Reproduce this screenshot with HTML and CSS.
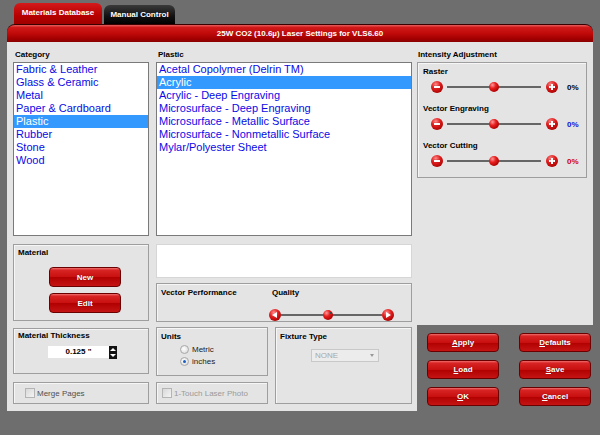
FILE: index.html
```html
<!DOCTYPE html>
<html lang="en">

<head>
    <meta charset="UTF-8">
    <meta name="viewport" content="width=device-width, initial-scale=1.0">
    <title>Laser Settings</title>
    <link rel="stylesheet" href="styles.css">
</head>

<body>
    <!-- Tabs -->
    <div class="tabs">
        <div class="tab active">Materials Database</div>
        <div class="tab">Manual Control</div>
    </div>

    <div class="window">
        <div class="titlebar">25W CO2 (10.6&micro;) Laser Settings for VLS6.60</div>

        <div class="panel">
            <!-- Left part of the panel -->
            <div class="left">
                <div class="col col-cat">
                    <div class="label">Category</div>
                    <ul class="listbox">
                        <li>Fabric &amp; Leather</li>
                        <li>Glass &amp; Ceramic</li>
                        <li>Metal</li>
                        <li>Paper &amp; Cardboard</li>
                        <li class="selected">Plastic</li>
                        <li>Rubber</li>
                        <li>Stone</li>
                        <li>Wood</li>
                    </ul>

                    <div class="group material">
                        <div class="label">Material</div>
                        <div class="btn-stack">
                            <button class="rbtn">New</button>
                            <button class="rbtn">Edit</button>
                        </div>
                    </div>

                    <div class="group thickness">
                        <div class="label">Material Thickness</div>
                        <div class="spin-row">
                            <div class="spin-input">0.125 "</div>
                            <div class="spinner">
                                <span class="up"></span>
                                <span class="down"></span>
                            </div>
                        </div>
                    </div>

                    <div class="group check-group">
                        <span class="checkbox"></span>
                        <span class="check-text">Merge Pages</span>
                    </div>
                </div>

                <div class="col col-plastic">
                    <div class="label">Plastic</div>
                    <ul class="listbox">
                        <li>Acetal Copolymer (Delrin TM)</li>
                        <li class="selected">Acrylic</li>
                        <li>Acrylic - Deep Engraving</li>
                        <li>Microsurface - Deep Engraving</li>
                        <li>Microsurface - Metallic Surface</li>
                        <li>Microsurface - Nonmetallic Surface</li>
                        <li>Mylar/Polyester Sheet</li>
                    </ul>

                    <div class="notes"></div>

                    <div class="group vector-perf">
                        <div class="label vp-label">Vector Performance</div>
                        <div class="quality">
                            <div class="label">Quality</div>
                            <div class="q-slider">
                                <span class="ball arrow-btn arrow-left"></span>
                                <div class="q-track">
                                    <span class="knob q-knob"></span>
                                    <span class="tick"></span>
                                </div>
                                <span class="ball arrow-btn arrow-right"></span>
                            </div>
                        </div>
                    </div>

                    <div class="bottom-row">
                        <div class="units-col">
                            <div class="group units">
                                <div class="label">Units</div>
                                <div class="radio-row"><span class="radio"></span>Metric</div>
                                <div class="radio-row"><span class="radio checked"></span>inches</div>
                            </div>
                            <div class="group check-group disabled">
                                <span class="checkbox"></span>
                                <span class="check-text">1-Touch Laser Photo</span>
                            </div>
                        </div>
                        <div class="group fixture">
                            <div class="label">Fixture Type</div>
                            <div class="select">NONE<span class="caret"></span></div>
                        </div>
                    </div>
                </div>
            </div>

            <!-- Right part of the panel -->
            <div class="right">
                <div class="right-top">
                    <div class="label">Intensity Adjustment</div>
                    <div class="group intensity">
                        <div class="slider-block">
                            <div class="label">Raster</div>
                            <div class="slider-row">
                                <span class="ball minus"></span>
                                <div class="track"><span class="knob"></span></div>
                                <span class="ball plus"></span>
                                <span class="pct">0%</span>
                            </div>
                        </div>
                        <div class="slider-block">
                            <div class="label">Vector Engraving</div>
                            <div class="slider-row">
                                <span class="ball minus"></span>
                                <div class="track"><span class="knob"></span></div>
                                <span class="ball plus"></span>
                                <span class="pct blue">0%</span>
                            </div>
                        </div>
                        <div class="slider-block">
                            <div class="label">Vector Cutting</div>
                            <div class="slider-row">
                                <span class="ball minus"></span>
                                <div class="track"><span class="knob"></span></div>
                                <span class="ball plus"></span>
                                <span class="pct red">0%</span>
                            </div>
                        </div>
                    </div>
                </div>

                <div class="actions">
                    <button class="rbtn"><u>A</u>pply</button>
                    <button class="rbtn"><u>D</u>efaults</button>
                    <button class="rbtn"><u>L</u>oad</button>
                    <button class="rbtn"><u>S</u>ave</button>
                    <button class="rbtn"><u>O</u>K</button>
                    <button class="rbtn"><u>C</u>ancel</button>
                </div>
            </div>
        </div>
    </div>
</body>

</html>
```

FILE: styles.css
```css
/* Page */
body {
    margin: 0;
    width: 600px;
    height: 435px;
    overflow: hidden;
    background-color: #6e6e6e;
    font-family: "Liberation Sans", Arial, sans-serif;
    font-size: 8px;
    color: #000;
}

/* Tabs */
.tabs {
    height: 24px;
    display: flex;
    align-items: flex-end;
    gap: 2px;
    padding-left: 14px;
}
.tab {
    width: 71px;
    height: 19px;
    box-sizing: border-box;
    padding-top: 5px;
    border-radius: 6px 6px 0 0;
    background: linear-gradient(#3a3a3a, #111 60%, #000);
    color: #fff;
    font-weight: bold;
    text-align: center;
}
.tab.active {
    width: 88px;
    height: 21px;
    padding-top: 5px;
    background: linear-gradient(#d41a1a, #b80000 60%, #a00000);
}

/* Window */
.window {
    margin: 0 7px;
}
.titlebar {
    height: 18px;
    line-height: 18px;
    border-radius: 8px 8px 0 0;
    box-sizing: border-box;
    border-top: 1px solid #3a0000;
    background: linear-gradient(#e86060 0, #d01818 15%, #c00a0a 50%, #a20000 80%, #8a0000 100%);
    color: #fff;
    font-weight: bold;
    text-align: center;
}
.panel {
    display: flex;
    height: 369px;
}

.left {
    width: 410px;
    box-sizing: border-box;
    background-color: #e4e4e4;
    padding: 5px 5px 7px 6px;
    display: flex;
    gap: 7px;
}
.col {
    display: flex;
    flex-direction: column;
}
.col-cat {
    width: 136px;
}
.col-plastic {
    width: 256px;
}

.label {
    font-weight: bold;
    line-height: 12px;
}
.col > .label {
    height: 15px;
    line-height: 15px;
    padding-left: 2px;
}

/* List boxes */
.listbox {
    list-style: none;
    margin: 0;
    padding: 0;
    height: 174px;
    box-sizing: border-box;
    border: 1px solid #7a7a7a;
    background-color: #fff;
}
.listbox li {
    height: 13px;
    line-height: 13px;
    padding-left: 2px;
    font-size: 11px;
    color: #0a0ae6;
    white-space: nowrap;
}
.listbox li.selected {
    background-color: #3399ff;
    color: #fff;
}

/* Group boxes */
.group {
    box-sizing: border-box;
    border: 1px solid #9e9e9e;
    box-shadow: inset 1px 1px 0 #f6f6f6;
}
.material {
    margin-top: 8px;
    height: 77px;
    padding: 2px 4px;
}
.btn-stack {
    display: flex;
    flex-direction: column;
    gap: 6px;
    margin: 8px 0 0 31px;
}

.rbtn {
    width: 72px;
    height: 20px;
    padding: 0;
    border: 1px solid #6a0000;
    border-radius: 4px;
    background: linear-gradient(#f07070 0, #d82424 12%, #c81010 50%, #b00000 51%, #c41414 100%);
    color: #fff;
    font-family: "Liberation Sans", Arial, sans-serif;
    font-size: 8px;
    font-weight: bold;
    text-shadow: 0 0 1px #600;
}
.rbtn u {
    text-underline-offset: 1px;
}

.thickness {
    margin-top: 7px;
    height: 46px;
    padding: 1px 4px;
}
.spin-row {
    display: flex;
    margin: 4px 0 0 30px;
}
.spin-input {
    width: 61px;
    height: 12px;
    line-height: 12px;
    background-color: #fff;
    font-weight: bold;
    text-align: center;
}
.spinner {
    width: 8px;
    height: 13px;
    background-color: #111;
    display: flex;
    flex-direction: column;
    align-items: center;
    justify-content: space-around;
}
.spinner .up,
.spinner .down {
    width: 0;
    height: 0;
    border-left: 3px solid transparent;
    border-right: 3px solid transparent;
}
.spinner .up {
    border-bottom: 3px solid #fff;
}
.spinner .down {
    border-top: 3px solid #fff;
}

.check-group {
    margin-top: 8px;
    height: 22px;
    display: flex;
    align-items: center;
    padding-left: 11px;
}
.checkbox {
    width: 8px;
    height: 8px;
    border: 1px solid #b4b4b4;
    background: linear-gradient(135deg, #d8d8d8, #f4f4f4);
    margin-right: 2px;
}
.check-text {
    color: #505050;
}
.check-group.disabled {
    margin-top: 6px;
    padding-left: 5px;
}
.check-group.disabled .check-text {
    color: #9a9a9a;
}

/* Plastic column extras */
.notes {
    margin-top: 8px;
    height: 34px;
    background-color: #fff;
    border: 1px solid #d6d6d6;
    box-sizing: border-box;
}
.vector-perf {
    margin-top: 5px;
    height: 39px;
    display: flex;
    padding: 3px 4px;
}
.vp-label {
    width: 111px;
}
.q-slider {
    display: flex;
    align-items: center;
    margin: 10px 0 0 -3px;
}
.q-track {
    position: relative;
    width: 101px;
    height: 2px;
    background-color: #666;
}
.q-knob {
    left: 0;
}
.tick {
    position: absolute;
    left: 49px;
    top: -2px;
    width: 2px;
    height: 2px;
    background-color: #444;
}

.bottom-row {
    margin-top: 5px;
    display: flex;
    gap: 7px;
}
.units-col {
    width: 112px;
    display: flex;
    flex-direction: column;
}
.units {
    height: 49px;
    padding: 3px 4px;
}
.radio-row {
    display: flex;
    align-items: center;
    height: 12px;
    padding-left: 19px;
    color: #222;
}
.radio {
    width: 7px;
    height: 7px;
    border: 1px solid #a8a8a8;
    border-radius: 50%;
    background: radial-gradient(circle at 40% 40%, #fff, #d4d4d4);
    margin-right: 3px;
    position: relative;
}
.radio.checked::after {
    content: "";
    position: absolute;
    left: 2px;
    top: 2px;
    width: 3px;
    height: 3px;
    border-radius: 50%;
    background-color: #1a5fc0;
}
.fixture {
    width: 137px;
    height: 77px;
    padding: 3px 4px;
}
.select {
    position: relative;
    width: 68px;
    height: 13px;
    box-sizing: border-box;
    margin: 6px 0 0 31px;
    padding-left: 3px;
    line-height: 11px;
    border: 1px solid #c8c8c8;
    background-color: #ececec;
    color: #a8a8a8;
}
.caret {
    position: absolute;
    right: 4px;
    top: 4px;
    border-left: 2px solid transparent;
    border-right: 2px solid transparent;
    border-top: 3px solid #999;
}

/* Right part */
.right {
    width: 176px;
    display: flex;
    flex-direction: column;
}
.right-top {
    height: 283px;
    box-sizing: border-box;
    background-color: #e4e4e4;
    padding: 5px 6px 0 0;
}
.right-top > .label {
    height: 15px;
    line-height: 15px;
    padding-left: 1px;
}
.intensity {
    height: 116px;
    padding: 3px 0 0 5px;
    display: flex;
    flex-direction: column;
    gap: 10px;
}
.slider-row {
    display: flex;
    align-items: center;
    margin: 3px 0 0 8px;
}
.track {
    position: relative;
    width: 94px;
    height: 2px;
    margin: 0 4px;
    background-color: #666;
}
.knob {
    position: absolute;
    top: -4px;
    left: 42px;
    width: 10px;
    height: 10px;
    border-radius: 50%;
    background: radial-gradient(circle at 35% 30%, #ff9a9a 0, #e82020 35%, #b00000 75%, #800000 100%);
}
.ball {
    position: relative;
    flex: none;
    width: 12px;
    height: 12px;
    border-radius: 50%;
    background: radial-gradient(circle at 40% 30%, #ff8c8c 0, #e01c1c 40%, #a80000 80%, #700000 100%);
}
.ball.plus {
    margin-left: 1px;
}
.minus::before,
.plus::before,
.plus::after {
    content: "";
    position: absolute;
    background-color: #fff;
    box-shadow: 0 0 1px #500;
}
.minus::before,
.plus::before {
    left: 3px;
    top: 5px;
    width: 6px;
    height: 2px;
}
.plus::after {
    left: 5px;
    top: 3px;
    width: 2px;
    height: 6px;
}
.pct {
    margin-left: 9px;
    font-weight: bold;
}
.pct.blue {
    color: #1010e0;
}
.pct.red {
    color: #d00000;
}

.arrow-btn::before {
    content: "";
    position: absolute;
    top: 3px;
    border-top: 3px solid transparent;
    border-bottom: 3px solid transparent;
}
.arrow-left::before {
    left: 3px;
    border-right: 5px solid #fff;
}
.arrow-right::before {
    left: 4px;
    border-left: 5px solid #fff;
}

/* Bottom-right action buttons */
.actions {
    display: grid;
    grid-template-columns: 72px 72px;
    grid-auto-rows: 19px;
    column-gap: 20px;
    row-gap: 8px;
    padding: 8px 0 0 10px;
}
.actions .rbtn {
    height: 19px;
}
```
